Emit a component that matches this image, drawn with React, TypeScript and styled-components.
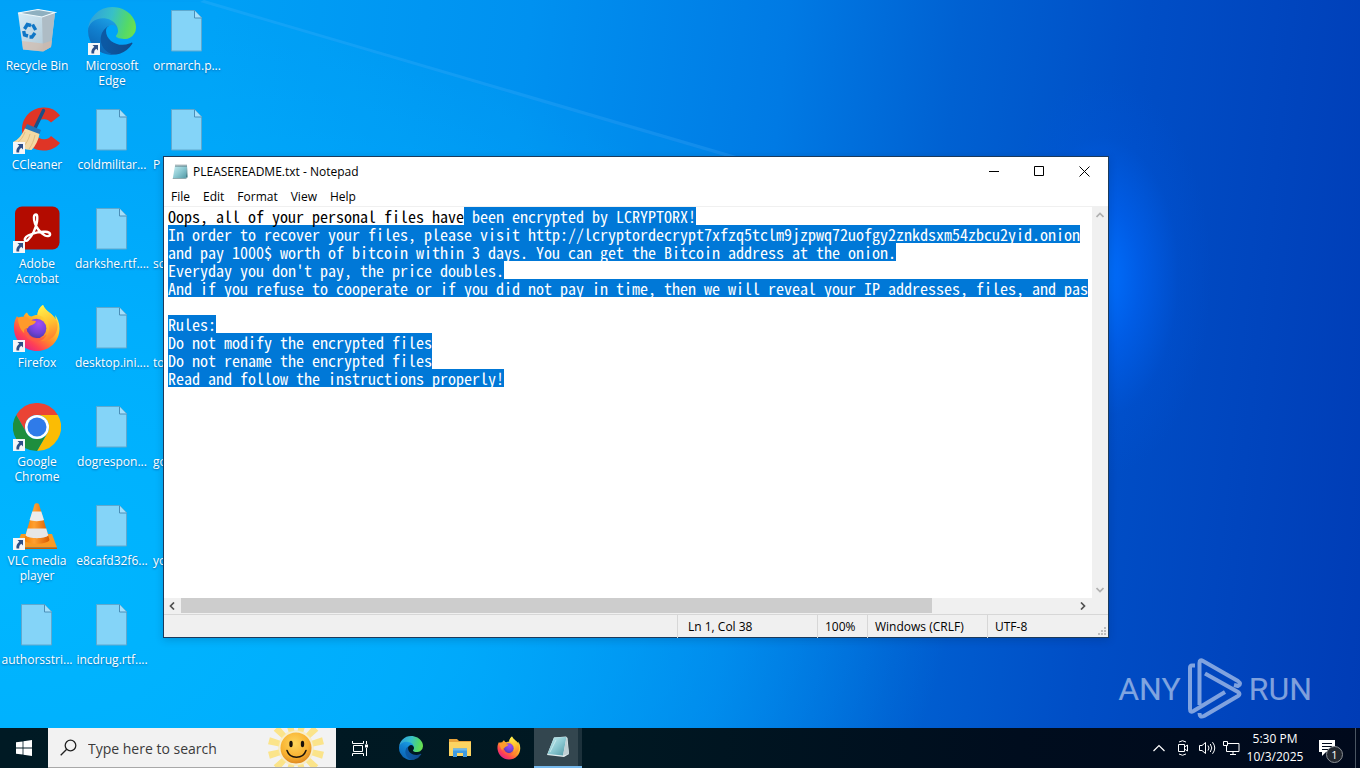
import React, { useEffect, useRef } from "react";
import styled, { createGlobalStyle, css } from "styled-components";

const GlobalStyle = createGlobalStyle`
  * { box-sizing: border-box; }
  body { margin: 0; font-family: "Open Sans", "Noto Sans", sans-serif; font-size: 12px; }
  button, input, textarea { font: inherit; color: inherit; border: 0; padding: 0; margin: 0; background: none; }
`;

/* ---------- desktop ---------- */

const Screen = styled.div`
  display: flex;
  flex-direction: column;
  height: 100vh;
  overflow: hidden;
`;

const Desktop = styled.main`
  position: relative;
  flex: 1;
  min-height: 0;
  background:
    radial-gradient(ellipse 110px 200px at 81% 38%, #0070ff 0%, #0066fa99 35%, #0058e033 70%, #0055dd00 100%),
    radial-gradient(ellipse 70% 80% at 0% 80%, #00b6ff 0%, #00b2ffcc 45%, #00a0ff00 100%),
    linear-gradient(96deg, #00a0f8 0%, #00a0f6 15%, #0091f0 37%, #007ae4 55%, #0061d2 67%, #004ec6 80%, #003cb6 100%);
`;

const LightRay = styled.svg`
  position: absolute;
  inset: 0;
  width: 100%;
  height: 100%;
`;

const IconGrid = styled.ul`
  position: relative;
  display: grid;
  grid-template-rows: repeat(7, 99px);
  grid-auto-flow: column;
  grid-auto-columns: 75px;
  margin: 0;
  padding: 0;
  list-style: none;
`;

const Shortcut = styled.button<{ $clipped?: boolean }>`
  display: flex;
  flex-direction: column;
  align-items: center;
  gap: 3px;
  width: 74px;
  padding-top: 7px;
  color: #fff;
  line-height: 15px;
  text-align: center;
  text-shadow: 0 1px 2px #003a7a99;
  ${(p) => p.$clipped && css`span { align-self: flex-start; padding-left: 3px; }`}
`;

/* ---------- notepad window ---------- */

const Window = styled.section`
  position: absolute;
  left: 163px;
  top: 156px;
  width: 946px;
  max-width: calc(100% - 163px);
  display: flex;
  flex-direction: column;
  border: 1px solid #1b3a5c;
  background: #fff;
  color: #000;
  box-shadow: 0 2px 8px #00204033;
`;

const TitleBar = styled.header`
  display: flex;
  align-items: center;
  height: 29px;
  padding: 0 1px 0 8px;
`;

const Title = styled.h1`
  flex: 1;
  margin: 0;
  padding-left: 5px;
  font-size: 12px;
  font-weight: 400;
`;

const WindowButton = styled.button`
  display: grid;
  place-items: center;
  width: 45px;
  height: 29px;
`;

const MenuBar = styled.nav`
  display: flex;
  gap: 13px;
  height: 21px;
  padding-left: 7px;
  line-height: 21px;
  border-bottom: 1px solid #f0f0f0;
`;

const Editor = styled.div`
  display: grid;
  grid-template-columns: 1fr 16px;
  grid-template-rows: 391px 16px;
  background: #f0f0f0;
`;

type Highlight = { line: number; from: number; length: number };

const highlightLayers = (marks: Highlight[]) => ({
  image: marks.map(() => "linear-gradient(#0078d7, #0078d7)").join(", "),
  position: marks.map((m) => `calc(4px + ${m.from}ch) ${m.line * 18}px`).join(", "),
  size: marks.map((m) => `${m.length}ch 18px`).join(", "),
});

const NoteText = styled.textarea<{ $marks: Highlight[] }>`
  display: block;
  width: 100%;
  height: 100%;
  padding: 0 4px;
  border: 0;
  outline: 0;
  resize: none;
  overflow: hidden;
  white-space: pre;
  font-family: "Noto Sans Mono CJK SC", monospace;
  font-size: 16px;
  line-height: 18px;
  background-color: #fff;
  background-repeat: no-repeat;
  background-image: ${(p) => highlightLayers(p.$marks).image};
  background-position: ${(p) => highlightLayers(p.$marks).position};
  background-size: ${(p) => highlightLayers(p.$marks).size};
  &::selection { background: transparent; color: #fff; }
`;

const VerticalScroll = styled.div`
  display: flex;
  flex-direction: column;
  justify-content: space-between;
`;

const ScrollButton = styled.button`
  display: grid;
  place-items: center;
  width: 16px;
  height: 16px;
`;

const HorizontalScroll = styled.div`
  display: grid;
  grid-template-columns: 17px 1fr 17px;
`;

const ScrollThumb = styled.div`
  width: 84%;
  height: 15px;
  background: #cdcdcd;
`;

const StatusBar = styled.footer`
  display: grid;
  grid-template-columns: 1fr 140px 50px 120px 121px;
  height: 23px;
  border-top: 1px solid #d7d7d7;
  background: #f0f0f0;
  line-height: 23px;
  position: relative;
`;

const StatusCell = styled.span<{ $wide?: boolean }>`
  padding-left: ${(p) => (p.$wide ? 10 : 7)}px;
  border-left: 1px solid #d7d7d7;
`;

const Grip = styled.svg`
  position: absolute;
  right: 1px;
  bottom: 1px;
`;

/* ---------- watermark ---------- */

const Watermark = styled.div`
  position: absolute;
  right: 48px;
  bottom: 8px;
  display: flex;
  align-items: center;
  gap: 6px;
  color: #ffffff80;
  font-family: "Roboto", sans-serif;
  font-size: 32px;
  line-height: 62px;
`;

/* ---------- taskbar ---------- */

const Taskbar = styled.footer`
  display: flex;
  height: 40px;
  background: linear-gradient(90deg, #001a24 0%, #001822 45%, #000d1e 75%, #00091c 100%);
  color: #fff;
`;

const TaskButton = styled.button<{ $active?: boolean }>`
  display: grid;
  place-items: center;
  width: 48px;
  height: 40px;
  ${(p) =>
    p.$active &&
    css`
      background: linear-gradient(90deg, #33464f 44px, #1c313b 44px);
      border-bottom: 2px solid #76b9ed;
    `}
`;

const Pinned = styled.div`
  display: flex;
  gap: 1px;
  padding-left: 3px;
  flex: 1;
`;

const SearchBox = styled.label`
  display: flex;
  align-items: center;
  width: 288px;
  padding: 0 8px 0 12px;
  background: #f2f2f2;
  border-bottom: 1px solid #a8a8a8;
  color: #222;
`;

const SearchInput = styled.input`
  flex: 1;
  min-width: 0;
  padding: 2px 0 0 11px;
  font-size: 14px;
  outline: 0;
  &::placeholder { color: #3b3b3b; opacity: 1; }
`;

const Tray = styled.div`
  display: flex;
  align-items: center;
`;

const TrayButton = styled.button`
  display: grid;
  place-items: center;
  width: 24px;
  height: 40px;
`;

const Clock = styled.time`
  width: 64px;
  line-height: 18px;
  text-align: center;
  white-space: pre-line;
`;

const ActionCenter = styled.button`
  position: relative;
  display: grid;
  place-items: center;
  width: 48px;
  height: 40px;
  padding-right: 8px;
`;

const Badge = styled.span`
  position: absolute;
  left: 19px;
  top: 18px;
  width: 17px;
  height: 17px;
  border: 1px solid #8a8f95;
  border-radius: 50%;
  background: #22272f;
  font-size: 11px;
  line-height: 15px;
  text-align: center;
`;

const ShowDesktop = styled.button`
  width: 5px;
  height: 40px;
  border-left: 1px solid #4a5562;
`;

/* ---------- drawings ---------- */

const Gradients = styled.svg`
  position: absolute;
`;

const Stops = ({ list }: { list: [string, string][] }) => (
  <>{list.map(([o, c]) => <stop key={o} offset={o} stopColor={c} />)}</>
);

const SharedGradients = () => (
  <Gradients width="0" height="0" aria-hidden="true">
    <defs>
      <linearGradient id="edgeDeep" x1="0.2" y1="0.5" x2="1" y2="0.6"><Stops list={[["0", "#0c59a4"], ["1", "#114a8b"]]} /></linearGradient>
      <linearGradient id="edgeMid" x1="0.7" y1="0.1" x2="0.3" y2="1"><Stops list={[["0", "#1b9de2"], ["0.4", "#1180cf"], ["1", "#0b61b0"]]} /></linearGradient>
      <linearGradient id="edgeTop" x1="0" y1="0.4" x2="1" y2="0.6"><Stops list={[["0", "#2f9fdc"], ["0.45", "#37c0c8"], ["0.8", "#52d96a"], ["1", "#6ce04e"]]} /></linearGradient>
      <linearGradient id="foxBody" x1="0.85" y1="0.1" x2="0.2" y2="0.95"><Stops list={[["0", "#fff44f"], ["0.3", "#ffc52f"], ["0.55", "#ff8a2a"], ["0.8", "#ff4055"], ["1", "#e0208c"]]} /></linearGradient>
      <linearGradient id="foxTail" x1="0.4" y1="0" x2="0.6" y2="1"><Stops list={[["0", "#fff04c"], ["0.5", "#ffc030"], ["1", "#ff7a30"]]} /></linearGradient>
      <radialGradient id="foxGlobe" cx="0.6" cy="0.25" r="0.8"><Stops list={[["0", "#a24cf5"], ["0.6", "#7442d8"], ["1", "#4a3aa8"]]} /></radialGradient>
      <linearGradient id="cone" x1="0" y1="0" x2="1" y2="0"><Stops list={[["0", "#f57c00"], ["0.4", "#ffa030"], ["1", "#d85a00"]]} /></linearGradient>
      <linearGradient id="binFace" x1="0" y1="0" x2="1" y2="1"><Stops list={[["0", "#e6f2f8"], ["0.7", "#c5d2da"], ["1", "#b5a59a"]]} /></linearGradient>
      <radialGradient id="sunFace" cx="0.45" cy="0.35" r="0.65"><Stops list={[["0", "#ffd65c"], ["0.7", "#f8b130"], ["1", "#e08a20"]]} /></radialGradient>
      <linearGradient id="padPage" x1="0" y1="0" x2="1" y2="1"><Stops list={[["0", "#c9eef2"], ["0.5", "#8cc9d2"], ["1", "#4f97a3"]]} /></linearGradient>
    </defs>
  </Gradients>
);

const EdgeArt = ({ size = 48 }: { size?: number }) => (
  <svg width={size} height={size} viewBox="0 0 256 256">
    <g transform="translate(-4.63 -4.92)">
      <path fill="url(#edgeDeep)" d="M235.68 195.46a93.73 93.73 0 0 1-10.54 4.71 101.87 101.87 0 0 1-35.9 6.46c-47.32 0-88.54-32.55-88.54-74.32A31.48 31.48 0 0 1 117.13 105c-42.8 1.8-53.8 46.4-53.8 72.53 0 73.88 68.09 81.37 82.76 81.37 7.91 0 19.84-2.3 27-4.56l1.31-.44a128.34 128.34 0 0 0 66.6-52.8 4 4 0 0 0-5.32-5.64Z" />
      <path fill="url(#edgeMid)" d="M110.34 246.34A79.2 79.2 0 0 1 87.6 225a80.72 80.72 0 0 1 29.53-120c3.12-1.47 8.45-4.13 15.54-4a32.35 32.35 0 0 1 25.69 13 31.88 31.88 0 0 1 6.36 18.66c0-.21 24.46-79.6-80-79.6-43.9 0-80 41.66-80 78.21a130.15 130.15 0 0 0 12.11 56 128 128 0 0 0 156.38 67.11 75.55 75.55 0 0 1-62.78-8Z" />
      <path fill="url(#edgeTop)" d="M156.94 153.78c-.81 1.05-3.3 2.5-3.3 5.66 0 2.61 1.7 5.12 4.72 7.23 14.38 10 41.49 8.68 41.56 8.68a59.56 59.56 0 0 0 30.27-8.35 61.38 61.38 0 0 0 30.43-52.88c.26-22.41-8-37.31-11.34-43.91-21.19-41.45-66.93-65.29-116.67-65.29a128 128 0 0 0-128 126.2c.48-36.54 36.8-66.05 80-66.05 3.5 0 23.46.34 42 10.07 16.34 8.58 24.9 18.94 30.85 29.21 6.18 10.67 7.28 24.15 7.28 29.52s-2.74 13.33-7.8 19.91Z" />
    </g>
  </svg>
);

const FirefoxArt = ({ size = 48 }: { size?: number }) => (
  <svg width={size} height={size} viewBox="0 0 48 48">
    <path fill="url(#foxBody)" d="M4 12c-2.600 4-3.500 9-2.900 14.500C2.500 38 12 47 24 47c12.500 0 22.500-9.500 22.500-22.500 0-6-2-10.500-4.500-13.500.5 2 .7 3.500.5 4.500C40.500 10 33 8 30 1c-3 2-5.500 6-5.500 10-2.500 0-4.500.7-6 1.600-3-.6-3.500-2.600-4.500-4.100-2 1-3 2.500-3.500 4.500-2 0-3.500.3-4.500.6C4.500 13 4.200 12.500 4 12Z" />
    <path fill="url(#foxTail)" d="M30 1c-3 2-5.500 6-5.500 10 6 1 11.500 5.500 11.500 13.500 0 6-4 10.500-8.500 12.500 9 1 16.500-5 17-14 .3-4-.5-7.500-2-7.500C40.500 10 33 8 30 1Z" />
    <circle cx="23.500" cy="24.500" r="9.800" fill="url(#foxGlobe)" />
    <path fill="#ff9a2b" d="M5 14c2.500-1.500 6-1.500 8.500-.5 2 .8 4 3.200 9.500 3.500-.3 2-2.500 3.700-5.500 4.500-1.500.5-2.500 1.500-2.500 3-3.500-1-4.500 2-3.500 5C7.500 26 5 20 5 14Z" />
    <path fill="#ff5a45" d="M11.500 28c1 6 6 9.500 11.500 9.500 5 0 9-3 10.500-7-3 3-6.500 4-10 3.500-4-.5-7-2.500-8.500-6Z" opacity="0.7" />
  </svg>
);

const ChromeArt = () => (
  <svg width="48" height="48" viewBox="0 0 48 48">
    <path fill="#ea4335" d="M3.200 12a24 24 0 0 1 41.600 0H24a12 12 0 0 0-10.400 18Z" />
    <path fill="#fbbc04" d="M44.800 12A24 24 0 0 1 24 48l10.400-18A12 12 0 0 0 24 12Z" />
    <path fill="#1e8e3e" d="M24 48A24 24 0 0 1 3.200 12l10.400 18a12 12 0 0 0 20.800 0Z" />
    <circle cx="24" cy="24" r="12" fill="#fff" />
    <circle cx="24" cy="24" r="9.500" fill="#2f7be9" />
  </svg>
);

const RecycleArt = () => (
  <svg width="48" height="48" viewBox="0 0 48 48">
    <path d="M5 6 25 2.500 42 5.500 38 40 30 44.500 10 42.500Z" fill="url(#binFace)" opacity="0.93" />
    <path d="M5 6 25 2.500 42 5.500 29 10Z" fill="#8fb0c0" />
    <path d="M29 10 42 5.500 38 40 30 44.500Z" fill="#aebcc5" />
    <path d="M5 6 25 2.500 42 5.500 29 10Z" fill="none" stroke="#eef8fc" strokeWidth="1.200" />
    <path d="m9 34 21 2.500 9-3-1 6.500-8 4.500-20-2Z" fill="#d9b9a5" opacity="0.6" />
    <g fill="none" stroke="#0f76c6" strokeWidth="3.400">
      <path d="m11.500 22 2.800-4.500 3.700 1" />
      <path d="m19.500 17.500 3.200 5.500" />
      <path d="m22 26-3 4h-2.500" />
      <path d="m15 29-3.500-1-.8-4" />
    </g>
  </svg>
);

const CCleanerArt = () => (
  <svg width="48" height="48" viewBox="0 0 48 48">
    <path d="M47 9.500C43 4 37 1 30 1.500 18 2 9 11.500 9 23.500S18 44 30 44.500c7 .3 13-2.500 17-7.500l-9-7c-2 2.500-4.500 3.500-7.500 3.200-5.500-.5-9-4.700-9-10s3.500-9.500 9-10c3-.2 5.500 1 7.500 3.300Z" fill="#df3526" />
    <path d="M30.500 4.500 22.500 21" stroke="#1b4f86" strokeWidth="3.400" strokeLinecap="round" />
    <path d="m14 18 14 6-2 5-15-5Z" fill="#2474b8" />
    <path d="M12 22.500 26.500 28c-1 6-4 12-8 16C12 44 5 41 0 36c5-2 9-7 12-13.500Z" fill="#f3d9a4" />
    <path d="M12 26c-2 5-4 8-8 11m13-9c-1.500 6-4 10-7 13m12-12c-1 5-3 10-6 14" stroke="#e0bf82" fill="none" />
  </svg>
);

const AcrobatArt = () => (
  <svg width="48" height="48" viewBox="0 0 48 48">
    <rect x="2" y="1.500" width="44.500" height="43" rx="7" fill="#b30b00" />
    <path d="M23 9.500c-2.500 0-2.700 4-1 9 1.800 5 5 9 10 12 3 1.500 5.500 0 5-1.800-.6-2.200-7-2.500-12.500-1.300S13 31 12 33.500c-.8 2 1.200 3 3 1.300 4-3.500 8-11.300 9-18 .5-4 .5-7.300-1-7.300Z" fill="none" stroke="#fff" strokeWidth="2.400" />
  </svg>
);

const ConeArt = () => (
  <svg width="48" height="48" viewBox="0 0 48 48">
    <path d="M8 32h31l5 13.500H3Z" fill="#f99a24" />
    <path d="M3 45.500h41v1.500H3Z" fill="#c85a00" />
    <path d="M21.500 2.500c.6-1.600 4-1.600 4.600 0L36.500 38c-3 5-22.500 5-25.500 0Z" fill="url(#cone)" />
    <path d="m19.300 9.500 9 0 2.700 8.500c-3 1.500-11.600 1.500-14.400 0Z" fill="#ececec" />
    <path d="m14.500 26.500 18.800 0 2 7c-3.500 3.500-19.300 3.500-22.800 0Z" fill="#e6e6e6" />
  </svg>
);

const FileArt = () => (
  <svg width="48" height="48" viewBox="0 0 48 48">
    <path d="M8.500 3.500h23l7 7v33.500h-30Z" fill="#84d4f8" stroke="#5fa9cf" />
    <path d="M31.500 3.500v7.500h7" fill="#a5e0fb" stroke="#4b8fb8" />
  </svg>
);

const ShortcutMark = styled.svg`
  position: absolute;
  left: 0;
  bottom: 0;
`;

const ArtFrame = styled.div`
  position: relative;
  display: flex;
  width: 48px;
  height: 48px;
`;

const NotepadArt = () => (
  <svg width="16" height="16" viewBox="0 0 16 16">
    <path d="M3 1.500h12l-1.200 13H.800Z" fill="url(#padPage)" />
    <path d="M15 1.500 15.600 13 13.800 14.500Z" fill="#3f7f8a" />
    <path d="M.8 14.500h13l1.800-1.500" fill="none" stroke="#8fa9ae" />
    <path d="M4 .5v2.500m2-2.500v2.500m2-2.500v2.500m2-2.500v2.500m2-2.500v2.500m2-2.500v2.500" stroke="#54636a" strokeWidth="0.800" />
  </svg>
);

const TaskNotepadArt = () => (
  <svg width="24" height="24" viewBox="0 0 24 24">
    <path d="M8 2.500 20 1.500 21.500 3 23 19 18 22 1 20Z" fill="#e3eef0" />
    <path d="M8 2.500 20.500 2 17 20.500 1.500 19Z" fill="url(#padPage)" />
    <path d="M20.500 2 23 19 17 20.500Z" fill="#bfcfd3" />
    <path d="M10 5 4 17" stroke="#d8f3f5" opacity="0.7" />
  </svg>
);

const Chevron = ({ d, color = "#b0b0b0" }: { d: string; color?: string }) => (
  <svg width="8" height="8" viewBox="0 0 8 8"><path d={d} fill="none" stroke={color} strokeWidth="1.700" /></svg>
);

const SunArt = () => (
  <svg width="64" height="39" viewBox="0 0 64 39">
    <g fill="#fbe48a">
      {Array.from({ length: 12 }, (_, i) => (
        <path key={i} d="M30 2 29.500 -7h5L34 2Z" transform={`rotate(${i * 30 + 15} 32 20)`} stroke="#fbe48a" strokeWidth="2" />
      ))}
    </g>
    <circle cx="32" cy="20" r="18" fill="#fbe9a8" opacity="0.5" />
    <circle cx="32" cy="20" r="15.500" fill="url(#sunFace)" />
    <ellipse cx="27" cy="16" rx="1.700" ry="3.200" fill="#1a120a" />
    <ellipse cx="38.500" cy="16" rx="1.700" ry="3.200" fill="#1a120a" />
    <path d="M23 22.500c3 9 16 9 19 0" fill="none" stroke="#1a120a" strokeWidth="1.500" strokeLinecap="round" />
  </svg>
);

const ExplorerArt = () => (
  <svg width="24" height="24" viewBox="0 0 24 24">
    <path d="M1 3h8l2 2h12v15H1Z" fill="#e8a33a" />
    <path d="M1 6h22v14H1Z" fill="#fcd462" />
    <path d="M5 12.500h14V21h-4v-4H9v4H5Z" fill="#3f9be0" />
    <path d="M5 12.500h14v2H5Z" fill="#6db8ee" />
  </svg>
);

/* ---------- data ---------- */

type Item = { label: string; art: React.ReactNode; linked?: boolean; clipped?: boolean };
const file = (label: string, clipped = false): Item => ({ label, art: <FileArt />, clipped });

const items: Item[] = [
  { label: "Recycle Bin", art: <RecycleArt /> },
  { label: "CCleaner", art: <CCleanerArt />, linked: true },
  { label: "Adobe Acrobat", art: <AcrobatArt />, linked: true },
  { label: "Firefox", art: <FirefoxArt />, linked: true },
  { label: "Google Chrome", art: <ChromeArt />, linked: true },
  { label: "VLC media player", art: <ConeArt />, linked: true },
  file("authorsstri..."),
  { label: "Microsoft Edge", art: <EdgeArt />, linked: true },
  file("coldmilitar..."),
  file("darkshe.rtf...."),
  file("desktop.ini...."),
  file("dogrespon..."),
  file("e8cafd32f6..."),
  file("incdrug.rtf...."),
  file("ormarch.p..."),
  file("P", true),
  file("sc", true),
  file("to", true),
  file("go", true),
  file("yo", true),
];

const noteLines = [
  "Oops, all of your personal files have been encrypted by LCRYPTORX!",
  "In order to recover your files, please visit http://lcryptordecrypt7xfzq5tclm9jzpwq72uofgy2znkdsxm54zbcu2yid.onion",
  "and pay 1000$ worth of bitcoin within 3 days. You can get the Bitcoin address at the onion.",
  "Everyday you don't pay, the price doubles.",
  "And if you refuse to cooperate or if you did not pay in time, then we will reveal your IP addresses, files, and pas",
  "",
  "Rules:",
  "Do not modify the encrypted files",
  "Do not rename the encrypted files",
  "Read and follow the instructions properly!",
];

const noteText = noteLines.join("\n");
const caretColumn = 37;

/* The selection runs from the caret to the end; line breaks stay unpainted. */
const selectionMarks: Highlight[] = noteLines
  .map((text, line) => {
    const from = line === 0 ? caretColumn : 0;
    return { line, from, length: text.length - from };
  })
  .filter((m) => m.length > 0);

function Notepad() {
  const note = useRef<HTMLTextAreaElement>(null);
  useEffect(() => {
    note.current?.focus();
    note.current?.setSelectionRange(caretColumn, noteText.length, "backward");
  }, []);
  return (
    <Window aria-label="Notepad">
      <TitleBar>
        <NotepadArt />
        <Title>PLEASEREADME.txt - Notepad</Title>
        <WindowButton aria-label="Minimize">
          <svg width="11" height="11"><path d="M0 5.500h10" stroke="#000" /></svg>
        </WindowButton>
        <WindowButton aria-label="Maximize">
          <svg width="11" height="11"><path d="M.5.5h9v9h-9Z" fill="none" stroke="#000" /></svg>
        </WindowButton>
        <WindowButton aria-label="Close">
          <svg width="11" height="11"><path d="m.5.5 10 10m0-10-10 10" stroke="#000" /></svg>
        </WindowButton>
      </TitleBar>
      <MenuBar>
        {["File", "Edit", "Format", "View", "Help"].map((m) => <button key={m}>{m}</button>)}
      </MenuBar>
      <Editor>
        <NoteText ref={note} $marks={selectionMarks} aria-label="Text editor" wrap="off" spellCheck={false} defaultValue={noteText} />
        <VerticalScroll>
          <ScrollButton aria-label="Scroll up"><Chevron d="m.5 6 3.500-3.500L7.500 6" /></ScrollButton>
          <ScrollButton aria-label="Scroll down"><Chevron d="m.5 2 3.500 3.500L7.500 2" /></ScrollButton>
        </VerticalScroll>
        <HorizontalScroll>
          <ScrollButton aria-label="Scroll left"><Chevron color="#505050" d="M6 .5 2.500 4 6 7.500" /></ScrollButton>
          <ScrollThumb />
          <ScrollButton aria-label="Scroll right"><Chevron color="#505050" d="M2 .5 5.500 4 2 7.500" /></ScrollButton>
        </HorizontalScroll>
      </Editor>
      <StatusBar>
        <span />
        <StatusCell $wide>Ln 1, Col 38</StatusCell>
        <StatusCell>100%</StatusCell>
        <StatusCell>Windows (CRLF)</StatusCell>
        <StatusCell>UTF-8</StatusCell>
        <Grip width="9" height="9">
          <path d="M6 0h2v2H6ZM3 3h2v2H3ZM6 3h2v2H6ZM0 6h2v2H0ZM3 6h2v2H3ZM6 6h2v2H6Z" fill="#bdbdbd" />
        </Grip>
      </StatusBar>
    </Window>
  );
}

export default function App() {
  return (
    <Screen>
      <GlobalStyle />
      <SharedGradients />
      <Desktop>
        <LightRay viewBox="0 0 1360 728" preserveAspectRatio="none" aria-hidden="true">
          <path d="M200 2 204 0 750 160H738Z" fill="#5cc0ff" opacity="0.2" />
          <path d="M200 2 738 160H0V0Z" fill="#00b4ff" opacity="0.12" />
        </LightRay>
        <IconGrid>
          {items.map((it) => (
            <li key={it.label}>
              <Shortcut $clipped={it.clipped}>
                <ArtFrame>
                  {it.art}
                  {it.linked && (
                    <ShortcutMark width="12" height="12" viewBox="0 0 12 12">
                      <path d="M0 0h12v12H0Z" fill="#f4f6f8" />
                      <path d="M4.500 2H10v5.500L8.300 5.800C6.500 7 6 8.500 6.200 10.500H3.500C3 7.800 4 5.500 6.300 3.800Z" fill="#2d4f87" />
                    </ShortcutMark>
                  )}
                </ArtFrame>
                <span>{it.label}</span>
              </Shortcut>
            </li>
          ))}
        </IconGrid>
        <Watermark>
          <span>ANY</span>
          <svg width="56" height="62" viewBox="0 0 56 62" fill="none" stroke="currentColor" strokeWidth="4" strokeLinejoin="round">
            <path d="M8 7.500H5Q3 7.500 3 10V51Q3 55 6.500 53L38 34M12.500 47V5Q12.500 1 16 3L51 23Q55 26 51 28L47 27M18 15.500 51 34Q54 36 51 38L17 58Q12.500 60 12.500 55" />
          </svg>
          <span>RUN</span>
        </Watermark>
        <Notepad />
      </Desktop>
      <Taskbar>
        <TaskButton aria-label="Start">
          <svg width="16" height="16" viewBox="0 0 16 16" fill="#fff">
            <path d="M0 2.300 6.600 1.400v6.200H0ZM7.400 1.300 16 0v7.600H7.400ZM0 8.400h6.600v6.200L0 13.700ZM7.400 8.400H16V16l-8.600-1.300Z" />
          </svg>
        </TaskButton>
        <SearchBox>
          <svg width="17" height="17" viewBox="0 0 17 17" fill="none" stroke="#222" strokeWidth="1.300">
            <circle cx="10.500" cy="6.500" r="5.300" /><path d="m6.700 10.300-6 6" />
          </svg>
          <SearchInput type="text" placeholder="Type here to search" aria-label="Search" />
          <SunArt />
        </SearchBox>
        <TaskButton aria-label="Task View">
          <svg width="17" height="15" viewBox="0 0 17 15" fill="none" stroke="#fff">
            <path d="M.5 0v2.500h11V0M.5 15v-2.500h11V15M1.500 4.500h9v6h-9ZM14.500 0v3m0 4v8" />
            <path d="M13 3.500h3v3h-3Z" fill="#fff" stroke="none" />
          </svg>
        </TaskButton>
        <Pinned>
          <TaskButton aria-label="Edge"><EdgeArt size={24} /></TaskButton>
          <TaskButton aria-label="File Explorer"><ExplorerArt /></TaskButton>
          <TaskButton aria-label="Firefox"><FirefoxArt size={24} /></TaskButton>
          <TaskButton aria-label="Notepad" $active><TaskNotepadArt /></TaskButton>
        </Pinned>
        <Tray>
          <TrayButton aria-label="Show hidden icons">
            <svg width="12" height="8"><path d="m.5 7 5.500-5.500L11.500 7" fill="none" stroke="#fff" strokeWidth="1.200" /></svg>
          </TrayButton>
          <TrayButton aria-label="Meet Now">
            <svg width="14" height="16" viewBox="0 0 14 16" fill="none" stroke="#fff">
              <path d="M2.500 4.500h6v7h-6ZM8.500 7l3-2v6l-3-2M3 2Q6.500-.5 10 2M3 14q3.500 2.500 7 0" />
            </svg>
          </TrayButton>
          <TrayButton aria-label="Volume">
            <svg width="17" height="14" viewBox="0 0 17 14" fill="none" stroke="#fff">
              <path d="M.5 4.500H3L6.500 1.500v11L3 9.500H.5ZM9 4.500q2 2.500 0 5M11.300 3q3 4 0 8M13.500 1.200q4.500 5.800 0 11.600" />
            </svg>
          </TrayButton>
          <TrayButton aria-label="Network">
            <svg width="17" height="14" viewBox="0 0 17 14" fill="none" stroke="#fff">
              <path d="M5 2.500h11v8H3.500V5M7 13.500h6M10 10.500v3M.5.500h4v4h-4Z" />
            </svg>
          </TrayButton>
          <Clock>{"5:30 PM\n10/3/2025"}</Clock>
          <ActionCenter aria-label="Notifications">
            <svg width="16" height="16" viewBox="0 0 16 16">
              <path d="M0 0h16v12H7l-4 4v-4H0Z" fill="#fff" />
              <path d="M3 3.500h10M3 6.500h10M3 9.500h7" stroke="#000a1c" />
            </svg>
            <Badge>1</Badge>
          </ActionCenter>
          <ShowDesktop aria-label="Show desktop" />
        </Tray>
      </Taskbar>
    </Screen>
  );
}
